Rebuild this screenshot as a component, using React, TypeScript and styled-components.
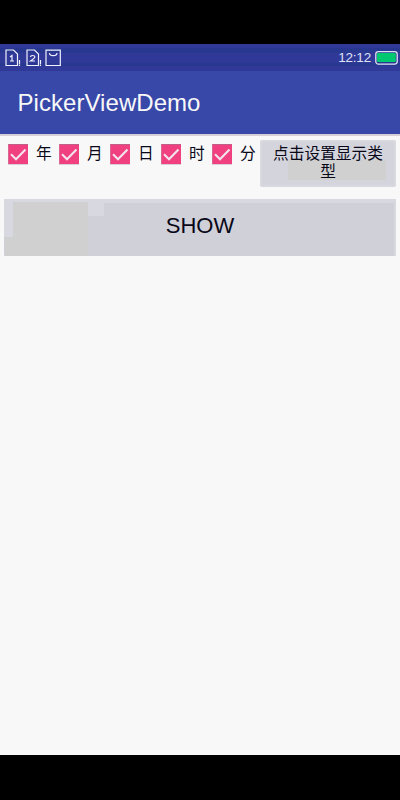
import React from "react";
import styled, { createGlobalStyle } from "styled-components";

const GlobalStyle = createGlobalStyle`
  * { box-sizing: border-box; }
  body { margin: 0; background: #000; }
`;

const Screen = styled.div`
  display: flex;
  flex-direction: column;
  width: 400px;
  height: 800px;
  padding: 44px 0 45px;
  background: #000;
  overflow: hidden;
  font-family: "Liberation Sans", "Noto Sans CJK SC", sans-serif;
`;

const StatusBar = styled.header`
  display: flex;
  flex: none;
  justify-content: space-between;
  height: 27px;
  padding: 5px 2px 0 5px;
  background: linear-gradient(#303898 0 4px, #283890 4px 9px, #303898 9px 19px, #283890 19px 22px, #303898 22px);
`;

const StatusGroup = styled.div`
  display: flex;
  align-items: flex-start;
`;

const Clock = styled.time`
  font-size: 13.5px;
  line-height: 18px;
  letter-spacing: -0.2px;
  color: #dfe2f5;
  margin-right: 4px;
`;

const AppBar = styled.div`
  display: flex;
  flex: none;
  align-items: center;
  height: 63px;
  padding-left: 17.5px;
  background: #3848a8;
`;

const Title = styled.h1`
  margin: 0;
  font-size: 24px;
  font-weight: 400;
  line-height: 30px;
  letter-spacing: 0.05px;
  color: #f8f8f8;
`;

const Content = styled.main`
  flex: 1;
  background: #f8f8f8;
  border-top: 2px solid #d8d0d8;
`;

const OptionsRow = styled.div`
  display: flex;
  align-items: flex-start;
  padding: 4px 4px 0 8px;
`;

const Option = styled.label`
  display: flex;
  flex: none;
  width: 51px;
  padding-top: 4px;
  gap: 8px;
  font-size: 15.7px;
  line-height: 20px;
  color: #080818;

  &:last-of-type { width: 48px; }
`;

const CheckMark = styled.span`
  display: flex;
  flex: none;
  width: 20px;
  height: 20px;
  background: #f04080;
  border-top: 1px solid #c06088;
  border-left: 1px solid #d86890;
  box-shadow: 0 1px #d8d0d8;
`;

const BaseButton = styled.button`
  display: block;
  margin: 0;
  border: 0;
  border-radius: 2px;
  font-family: inherit;
  color: #080818;
  text-align: center;
`;

const TypeButton = styled(BaseButton)`
  flex: none;
  width: 136px;
  height: 47px;
  padding: 0 10px 1px;
  font-size: 15.7px;
  line-height: 18px;
  background:
    linear-gradient(#d0d0d0, #d0d0d0) 28px 20px / 98px 20px no-repeat,
    #d4d4dc;
  box-shadow: inset 0 0 0 2px #d8d8e0;
`;

const ShowButton = styled(BaseButton)`
  width: 392px;
  height: 57px;
  margin: 12px 4px 0;
  padding: 0 0 3px;
  font-size: 22px;
  border-radius: 1px;
  background:
    linear-gradient(#d0d0d0, #d0d0d0) 9px 3px / 75px 54px no-repeat,
    linear-gradient(#d0d0d0, #d0d0d0) 1px 38px / 8px 19px no-repeat,
    linear-gradient(#d8d8e0, #d8d8e0) 84px 0 / 16px 17px no-repeat,
    linear-gradient(#d8d8e0, #d8d8e0) 0 0 / 100% 4px no-repeat,
    linear-gradient(#d8d8e0, #d8d8e0) 100% 0 / 2px 100% no-repeat,
    linear-gradient(#d8d8e0, #d8d8e0) 0 0 / 9px 38px no-repeat,
    #d0d0d8;
`;

function SimIcon({ slot }: { slot: number }) {
  return (
    <svg width="21" height="18" viewBox="0 0 21 18" fill="none" stroke="#f0f0fc" strokeWidth="1.2">
      <path d="M1 1h7.5l4 4v11.5H1z" />
      {slot === 1 ? <path d="M5 8l2-1.5V12M5 12h4" /> : <path d="M4.5 8q0-1.5 2.2-1.5T8.8 8Q8.8 9 4.5 12H9" />}
      <path d="M14.5 11v4.5M14.5 16v1" />
    </svg>
  );
}

const BagSvg = styled.svg`
  margin-left: -2px;
`;

function BagIcon() {
  return (
    <BagSvg width="17" height="18" viewBox="0 0 17 18" fill="none" stroke="#f0f0fc" strokeWidth="1.2">
      <path d="M1 1.2h14.3v15.3H1zM4.5 4q0 2.7 3.7 2.7T12 4" />
    </BagSvg>
  );
}

function BatteryIcon() {
  return (
    <svg width="23" height="16" viewBox="0 0 23 16">
      <rect x=".8" y="2.7" width="21.4" height="12.4" rx="2.5" fill="#283890" stroke="#dfe2f5" strokeWidth="1.3" />
      <rect x="2" y="4" width="18.8" height="9" rx="1" fill="#00c870" />
    </svg>
  );
}

const options = ["年", "月", "日", "时", "分"];

export default function App() {
  return (
    <>
      <GlobalStyle />
      <Screen>
        <StatusBar>
          <StatusGroup>
            <SimIcon slot={1} />
            <SimIcon slot={2} />
            <BagIcon />
          </StatusGroup>
          <StatusGroup>
            <Clock>12:12</Clock>
            <BatteryIcon />
          </StatusGroup>
        </StatusBar>
        <AppBar>
          <Title>PickerViewDemo</Title>
        </AppBar>
        <Content>
          <OptionsRow>
            {options.map((name) => (
              <Option key={name}>
                <CheckMark>
                  <svg width="19" height="19" viewBox="0 0 19 19" fill="none" stroke="#f4e4ec" strokeWidth="2.1">
                    <path d="M2 9.3l5 5L16.5 4.5" />
                  </svg>
                </CheckMark>
                <span>{name}</span>
              </Option>
            ))}
            <TypeButton>点击设置显示类型</TypeButton>
          </OptionsRow>
          <ShowButton>SHOW</ShowButton>
        </Content>
      </Screen>
    </>
  );
}
